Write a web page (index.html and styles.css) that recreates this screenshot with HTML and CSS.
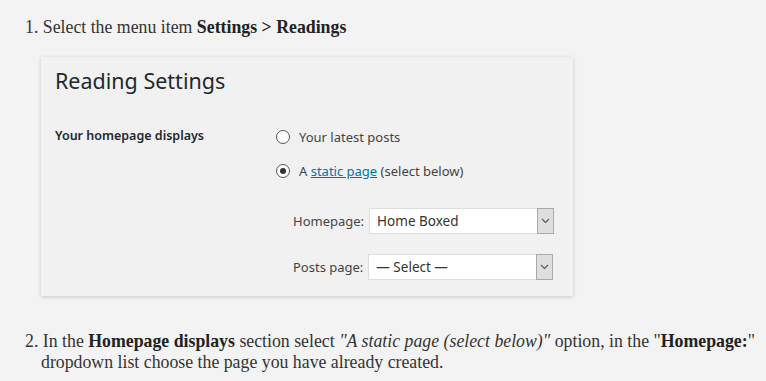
FILE: index.html
```html
<!DOCTYPE html>
<html>
<head>
<meta charset="utf-8">
<link rel="stylesheet" href="styles.css">
</head>
<body>
<div class="page">
  <p class="step step-first"><span class="num">1.</span> Select the menu item <b>Settings &gt; Readings</b></p>
  <div class="card">
    <h1 class="card-title">Reading Settings</h1>
    <div class="row">
      <div class="row-label">Your homepage displays</div>
      <div class="options">
        <div class="radio"><span class="dot"></span><span>Your latest posts</span></div>
        <div class="radio checked"><span class="dot"></span><span>A <a class="link">static page</a> (select below)</span></div>
        <div class="selects">
          <div class="sel-row">
            <span class="sel-label">Homepage:</span>
            <div class="select"><span class="sel-value">Home Boxed</span><span class="arrow"><svg width="9" height="6" viewBox="0 0 9 6"><path d="M1 1 L4.5 4.5 L8 1" fill="none" stroke="#555" stroke-width="1.1"/></svg></span></div>
          </div>
          <div class="sel-row">
            <span class="sel-label">Posts page:</span>
            <div class="select"><span class="sel-value">— Select —</span><span class="arrow"><svg width="9" height="6" viewBox="0 0 9 6"><path d="M1 1 L4.5 4.5 L8 1" fill="none" stroke="#555" stroke-width="1.1"/></svg></span></div>
          </div>
        </div>
      </div>
    </div>
  </div>
  <p class="step step-second"><span class="num">2.</span> In the <b>Homepage displays</b> section select <i>"A static page (select below)"</i> option, in the "<b>Homepage:</b>"<br><span class="indent">dropdown list choose the page you have already created.</span></p>
</div>
</body>
</html>
```

FILE: styles.css
```css
html, body {
  margin: 0;
  padding: 0;
  background: #f3f3f3;
}
.page {
  padding: 17px 0 0 25px;
  width: 741px;
  font-family: "Liberation Serif", "Times New Roman", serif;
  color: #333;
}
.step {
  margin: 0;
  font-size: 17.8px;
  line-height: 21px;
}
.step b { color: #222; }
.indent { padding-left: 16px; }
.step-second {
  margin-top: 35px;
}
.card {
  margin: 19px 0 0 16px;
  width: 532px;
  height: 239px;
  box-sizing: border-box;
  background: #f1f1f1;
  box-shadow: 0 1px 4px rgba(0,0,0,0.18);
  padding: 9px 14px 0 14px;
  font-family: "Noto Sans", "Open Sans", sans-serif;
  color: #444;
}
.card-title {
  margin: 0;
  font-weight: 400;
  font-size: 21.5px;
  line-height: 30px;
  color: #23282d;
}
.row {
  display: flex;
  margin-top: 31px;
}
.row-label {
  width: 221px;
  font-size: 12.5px;
  font-weight: 600;
  color: #23282d;
  line-height: 18px;
}
.options {
  display: flex;
  flex-direction: column;
  font-size: 13px;
}
.radio {
  display: flex;
  align-items: center;
  gap: 9px;
  height: 20px;
  margin-top: 0;
}
.radio + .radio { margin-top: 14px; }
.dot {
  width: 12px;
  height: 12px;
  border: 1px solid #555;
  border-radius: 50%;
  background: #fff;
  position: relative;
  box-sizing: content-box;
}
.checked .dot::after {
  content: "";
  position: absolute;
  left: 3px;
  top: 3px;
  width: 6px;
  height: 6px;
  border-radius: 50%;
  background: #333;
}
.link {
  color: #0073aa;
  text-decoration: underline;
}
.selects {
  display: flex;
  flex-direction: column;
  gap: 20px;
  margin-top: 27px;
  padding-left: 17px;
}
.sel-row {
  display: flex;
  align-items: center;
  gap: 5px;
}
.sel-label {
  font-size: 13px;
  color: #444;
}
.select {
  width: 185px;
  height: 26px;
  box-sizing: border-box;
  background: #fff;
  border: 1px solid #ddd;
  display: flex;
  align-items: center;
  justify-content: space-between;
}
.sel-value {
  padding-left: 7px;
  font-size: 13.5px;
  color: #333;
}
.arrow {
  width: 17px;
  height: 26px;
  box-sizing: border-box;
  margin-right: -1px;
  background: #dedede;
  border: 1px solid #aaa;
  display: flex;
  align-items: center;
  justify-content: center;
}
```
